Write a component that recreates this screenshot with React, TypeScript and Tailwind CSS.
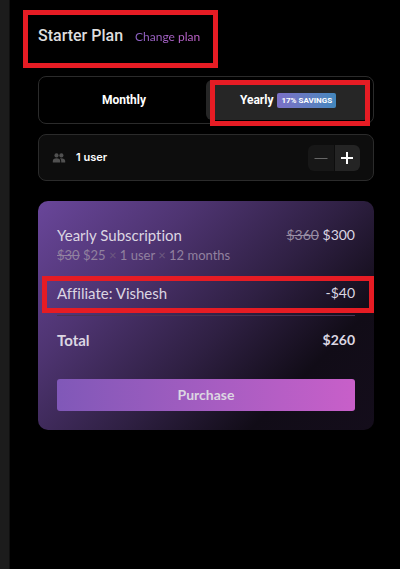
import { useState } from "react";

const outline = "pointer-events-none absolute border-[5px] border-[#e61c24]";

function UsersIcon() {
  return (
    <svg viewBox="0 0 14 12" className="h-3 w-3.5 fill-[#505050]" aria-hidden="true">
      <circle cx="4.5" cy="3.4" r="2.1" />
      <circle cx="9.4" cy="3.4" r="2.1" />
      <path d="M.8 10.5V9c0-1.700 1.500-2.700 3.700-2.700S8.200 7.300 8.200 9v1.500z" />
      <path d="M9.200 10.500V9c0-1.100-.4-2-1.200-2.600 2.600-.4 5.200.6 5.200 2.600v1.500z" />
    </svg>
  );
}

export default function App() {
  const [yearly, setYearly] = useState(true);
  const tab = "flex flex-1 items-center justify-center gap-1 rounded-md text-xs font-bold text-white";

  return (
    <div className="flex min-h-screen bg-black font-['Lato',sans-serif] text-[#dcd6e2] [font-variant-ligatures:none]">
      <aside className="w-2.5 shrink-0 border-r border-[#101010] bg-[#1c1c1c]" />
      <main className="min-w-0 flex-1 pt-6 pr-[26px] pb-6 pl-7">
        <header className="flex">
          <div className="relative flex items-baseline gap-3">
            <h1 className="font-['Roboto',sans-serif] text-base leading-6 font-medium text-[#dedede]">Starter Plan</h1>
            <a href="#plans" className="bg-linear-to-r from-[#8c62c4] to-[#c864d0] bg-clip-text text-xs text-transparent">
              Change plan
            </a>
            <div className={`${outline} -top-3.5 -right-[18px] -bottom-5 -left-[15px]`} />
          </div>
        </header>

        <div className="mt-7 flex h-12 rounded-lg border border-[#2b2b2b] p-[3px] font-['Roboto',sans-serif]">
          <button type="button" aria-pressed={!yearly} onClick={() => setYearly(false)} className={`${tab} ${yearly ? "" : "bg-[#262626]"}`}>
            Monthly
          </button>
          <div className="relative flex flex-1">
            <button type="button" aria-pressed={yearly} onClick={() => setYearly(true)} className={`${tab} ${yearly ? "bg-[#262626]" : ""}`}>
              Yearly
              <span className="rounded-xs bg-linear-to-r from-[#7b70c6] to-[#4287bd] px-1 text-[8px] leading-[15px] font-bold whitespace-nowrap">
                17% SAVINGS
              </span>
            </button>
            <div className={`${outline} top-0 right-0 -bottom-1.5 left-1`} />
          </div>
        </div>

        <div className="mt-2.5 flex h-[47px] items-center rounded-lg border border-[#2b2b2b] bg-[#0d0d0d] px-[13px]">
          <UsersIcon />
          <span className="ml-2.5 font-['Inter',sans-serif] text-[11px] font-semibold text-white">1 user</span>
          <div className="ml-auto flex h-[26px] w-[52px] overflow-hidden rounded-md">
            <button type="button" aria-label="Remove user" disabled className="flex flex-1 items-center justify-center bg-[#171717]">
              <svg viewBox="0 0 14 14" className="size-3.5 stroke-[#666]" aria-hidden="true">
                <path d="M.5 7.500h13" />
              </svg>
            </button>
            <button type="button" aria-label="Add user" className="flex flex-1 items-center justify-center border-l border-[#0d0d0d] bg-[#242424]">
              <svg viewBox="0 0 14 14" className="size-3.5 stroke-white stroke-2" aria-hidden="true">
                <path d="M1 7h12M7 1v12" />
              </svg>
            </button>
          </div>
        </div>

        <section className="mt-5 rounded-[10px] bg-[linear-gradient(135deg,#69469a_0%,#4e3471_28%,#2f2043_55%,#110c17_78%,#140d1b_100%)] px-[19px] pt-6 pb-[19px] text-[15px] leading-5">
          <div className="flex justify-between">
            <span>Yearly Subscription</span>
            <span className="text-sm leading-5">
              <s className="text-[#978da3]">$360</s> $300
            </span>
          </div>
          <p className="text-[13px] leading-5 text-[#91819f]">
            <s>$30</s> $25 <span className="text-[#6d597f]">×</span> 1 user <span className="text-[#6d597f]">×</span> 12 months
          </p>
          <div className="relative mt-[18px] flex justify-between">
            <span>Affiliate: Vishesh</span>
            <span className="text-sm leading-5">-$40</span>
            <div className={`${outline} -top-[7px] -right-[19px] -bottom-2.5 -left-[15px]`} />
          </div>
          <hr className="mt-3 border-[#463553]" />
          <div className="mt-3.5 flex justify-between font-bold">
            <span>Total</span>
            <span className="text-sm leading-5">$260</span>
          </div>
          <button type="button" className="mt-[29px] h-8 w-full rounded-[3px] bg-linear-to-r from-[#8058b8] to-[#c85fc9] text-sm font-bold">
            Purchase
          </button>
        </section>
      </main>
    </div>
  );
}
